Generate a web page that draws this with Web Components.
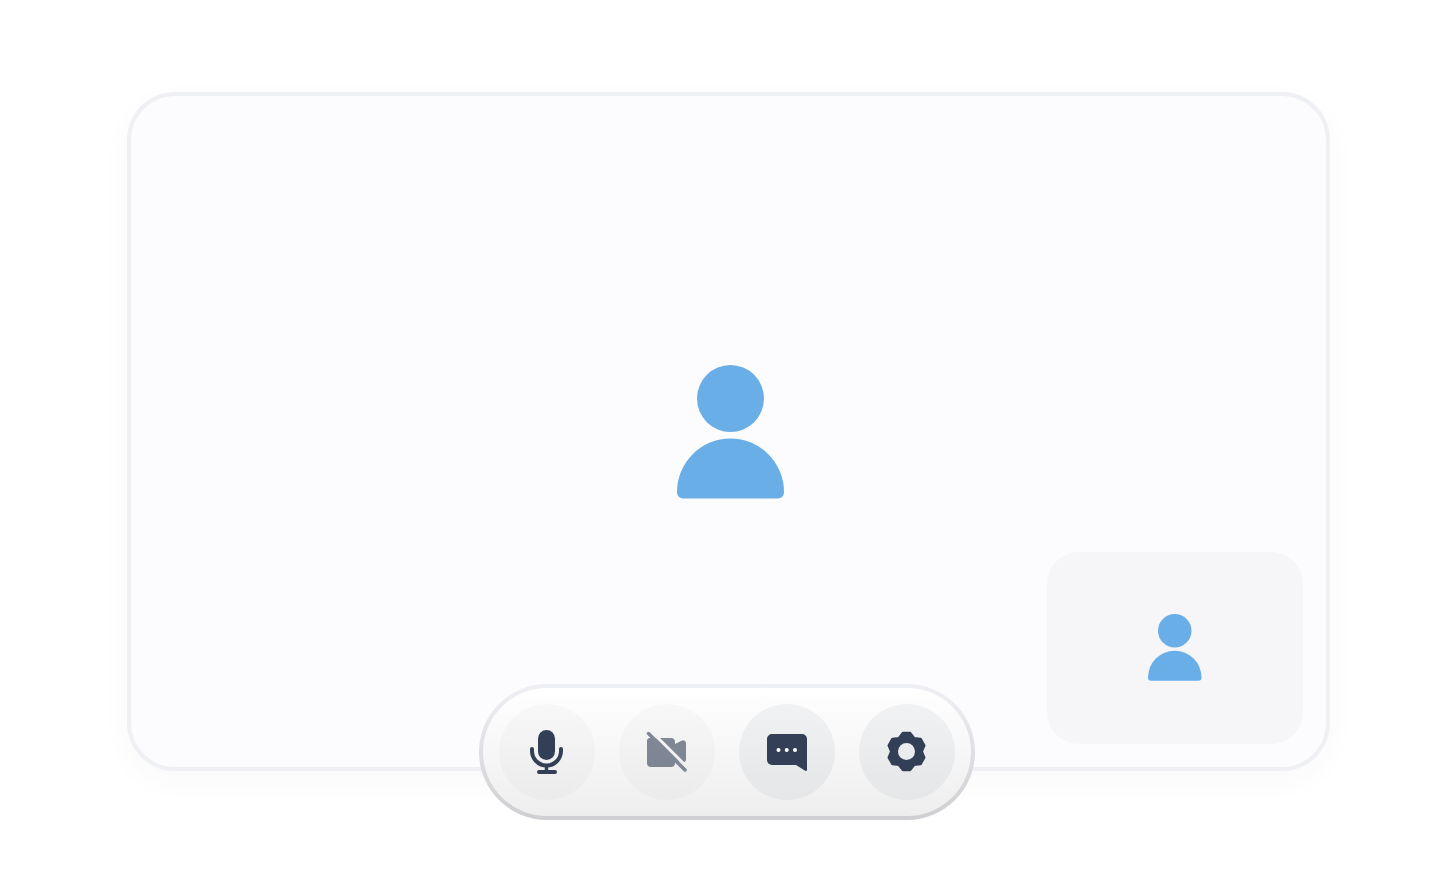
<!DOCTYPE html>
<html>
<head>
<meta charset="utf-8">
<title>Call</title>
<style>
  html, body { margin: 0; height: 100%; background: #fff; overflow: hidden; }
  body { padding: 92px 0 0 127px; box-sizing: border-box; }
</style>
</head>
<body>
<call-stage>
  <person-icon size="107"></person-icon>
  <call-pip slot="pip"><person-icon size="53.5"></person-icon></call-pip>
  <call-controls slot="controls">
    <call-button label="Mute">
      <svg width="48" height="48" viewBox="0 0 48 48">
        <rect x="15" y="2" width="17" height="30" rx="8.5" fill="#333f57"/>
        <path d="M9 21v2a14.500 14.500 0 0 0 29 0v-2" fill="none" stroke="#333f57" stroke-width="4" stroke-linecap="round"/>
        <path d="M23.500 38v6" stroke="#333f57" stroke-width="3.500"/>
        <rect x="14" y="42" width="20" height="4" rx="2" fill="#333f57"/>
      </svg>
    </call-button>
    <call-button label="Camera off" off>
      <svg width="48" height="48" viewBox="0 0 48 48">
        <mask id="cam-gap">
          <rect width="48" height="48" fill="#fff"/>
          <path d="M8 3l38 38" stroke="#000" stroke-width="3"/>
        </mask>
        <path mask="url(#cam-gap)" d="M7 10H28a4 4 0 0 1 4 4v2l7-3.500a3 3 0 0 1 4 2.500V32a3 3 0 0 1-4 2L32 32v3a4 4 0 0 1-4 4H8a4 4 0 0 1-4-4V13a3 3 0 0 1 3-3z" fill="#333f57"/>
        <path d="M5.500 5.500l36.500 36.500" stroke="#333f57" stroke-width="3.500" stroke-linecap="round"/>
      </svg>
    </call-button>
    <call-button label="Chat" dark>
      <svg width="48" height="48" viewBox="0 0 48 48">
        <path d="M9 6h30a5 5 0 0 1 5 5v30.500a1.300 1.300 0 0 1-1.800 1.200L33 37H9a5 5 0 0 1-5-5V11a5 5 0 0 1 5-5z" fill="#333f57"/>
        <circle cx="15.500" cy="22" r="2" fill="#fff"/><circle cx="23.700" cy="22" r="2" fill="#fff"/><circle cx="32" cy="22" r="2" fill="#fff"/>
      </svg>
    </call-button>
    <call-button label="Settings" dark>
      <svg width="48" height="48" viewBox="0 0 48 48">
        <mask id="gear-hole">
          <rect width="48" height="48" fill="#fff"/>
          <circle cx="23.500" cy="23.500" r="8.500" fill="#000"/>
        </mask>
        <g mask="url(#gear-hole)">
          <polygon transform="translate(23.500 23.500)" fill="#333f57" stroke="#333f57" stroke-width="3" stroke-linejoin="round"
            points="-3.530,-18.160 3.530,-18.160 7.500,-13 13.960,-12.140 17.490,-6.020 15,0 17.490,6.020 13.960,12.140 7.500,13 3.530,18.160 -3.530,18.160 -7.500,13 -13.960,12.140 -17.490,6.020 -15,0 -17.490,-6.020 -13.960,-12.140 -7.500,-13"/>
        </g>
      </svg>
    </call-button>
  </call-controls>
</call-stage>
<script>
class PersonIcon extends HTMLElement {
  connectedCallback() {
    const w = Number(this.getAttribute('size')) || 107
    this.attachShadow({ mode: 'open' }).innerHTML = `
      <style>:host { display: block; line-height: 0; }</style>
      <svg width="${w}" height="${w * 133.5 / 107}" viewBox="0 0 107 133.500" fill="#6aaee8">
        <circle cx="53.500" cy="33.500" r="33.500"/>
        <path d="M0 127a53.500 53.500 0 0 1 107 0v.5a6 6 0 0 1-6 6H6a6 6 0 0 1-6-6z"/>
      </svg>`
  }
}
customElements.define('person-icon', PersonIcon)

class CallStage extends HTMLElement {
  constructor() {
    super()
    this.attachShadow({ mode: 'open' }).innerHTML = `
      <style>
        :host {
          display: flex; align-items: center; justify-content: center;
          position: relative; box-sizing: border-box;
          width: 1203px; height: 679px;
          border: 4px solid #eff0f4; border-radius: 48px;
          background: #fcfcfe;
          box-shadow: 0 10px 30px rgba(60, 70, 110, .03);
        }
        .center { margin: 1px 0 0 3px; }
        ::slotted([slot=pip]) { position: absolute; right: 23px; bottom: 23px; }
        ::slotted([slot=controls]) { position: absolute; left: 348px; top: 588px; }
      </style>
      <div class="center"><slot></slot></div>
      <slot name="pip"></slot>
      <slot name="controls"></slot>`
  }
}
customElements.define('call-stage', CallStage)

class CallPip extends HTMLElement {
  constructor() {
    super()
    this.attachShadow({ mode: 'open' }).innerHTML = `
      <style>
        :host {
          display: flex; align-items: center; justify-content: center;
          box-sizing: border-box; padding-bottom: 1px;
          width: 256px; height: 192px; border-radius: 32px;
          background: #f6f6f8;
        }
      </style>
      <slot></slot>`
  }
}
customElements.define('call-pip', CallPip)

class CallControls extends HTMLElement {
  constructor() {
    super()
    this.attachShadow({ mode: 'open' }).innerHTML = `
      <style>
        :host {
          display: flex; gap: 24px; padding: 16px; box-sizing: border-box;
          width: 496px; height: 136px; border: 4px solid transparent; border-radius: 68px;
          background:
            linear-gradient(#fff, #eeeeee) padding-box,
            linear-gradient(#eff0f4, #cfcfd2) border-box;
        }
      </style>
      <slot></slot>`
  }
}
customElements.define('call-controls', CallControls)

class CallButton extends HTMLElement {
  constructor() {
    super()
    this.attachShadow({ mode: 'open' }).innerHTML = `
      <style>
        :host {
          display: flex; align-items: center; justify-content: center;
          width: 96px; height: 96px; border-radius: 50%;
          background: rgba(120, 120, 125, .04);
        }
        :host([dark]) { background: rgba(100, 110, 130, .075); }
        :host([off]) ::slotted(svg) { opacity: .6; }
      </style>
      <slot></slot>`
    this.setAttribute('aria-label', this.getAttribute('label') || '')
  }
}
customElements.define('call-button', CallButton)
</script>
</body>
</html>
